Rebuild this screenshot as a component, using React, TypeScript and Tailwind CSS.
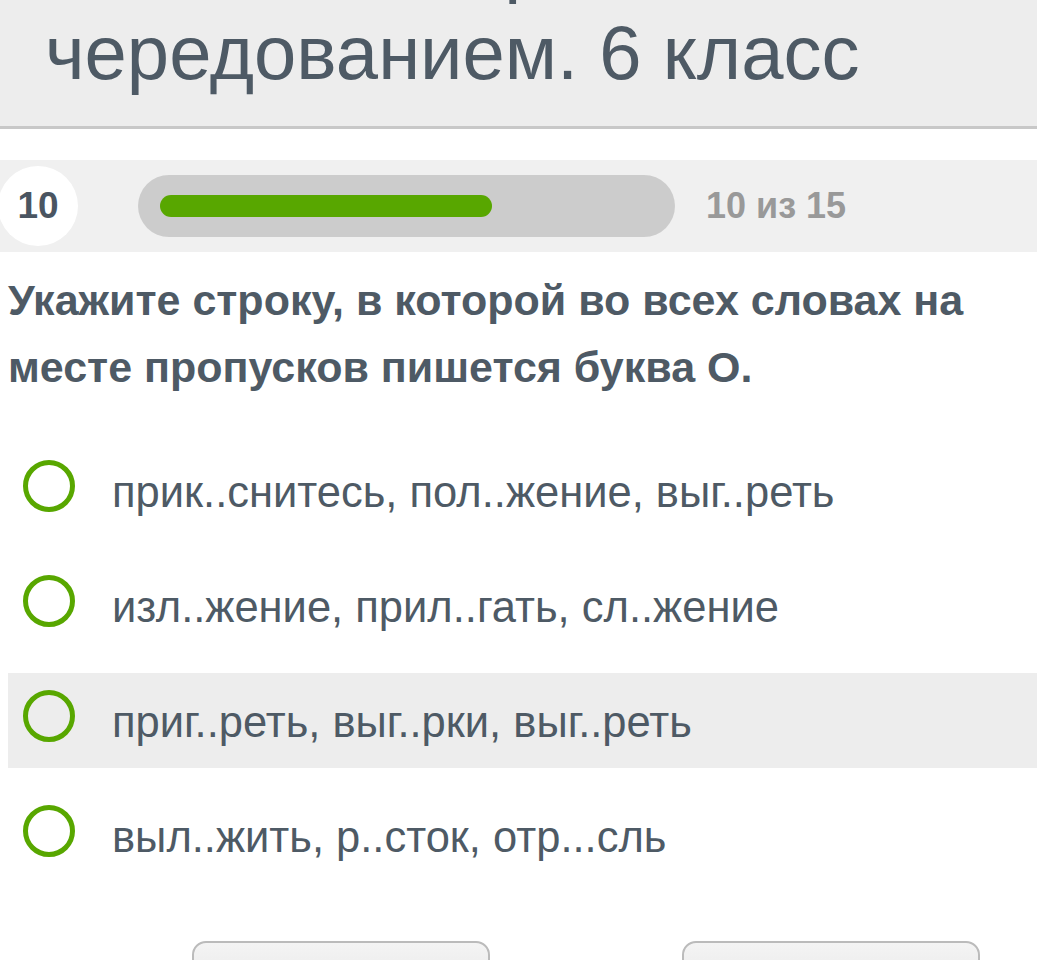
const options = [
  'прик..снитесь, пол..жение, выг..реть',
  'изл..жение, прил..гать, сл..жение',
  'приг..реть, выг..рки, выг..реть',
  'выл..жить, р..сток, отр...сль',
];

export default function App() {
  const progress = 332 / 493;

  return (
    <div className="w-[1037px] h-[960px] overflow-hidden bg-white text-[#4e5a65] font-['Liberation_Sans',Arial,sans-serif]">
      {/* header */}
      <div className="bg-[#ededed] border-b-[3px] border-[#c8c8c8] h-[129px] overflow-hidden">
        <div className="-mt-[84px] pl-[45px] text-[76px] leading-[91px] whitespace-nowrap">
          <div>Гласные в корнях с</div>
          <div>чередованием. 6 класс</div>
        </div>
      </div>

      {/* progress */}
      <div className="mt-[31px] h-[92px] bg-[#f0f0f0] flex items-center">
        <div className="-ml-[2px] w-[80px] h-[80px] rounded-full bg-white flex items-center justify-center text-[37px] font-bold text-[#4a5561]">
          10
        </div>
        <div className="ml-[60px] w-[537px] h-[62px] rounded-full bg-[#cccccc] flex items-center px-[22px]">
          <div className="h-[22px] rounded-full bg-[#58a700]" style={{ width: `${progress * 100}%` }} />
        </div>
        <div className="ml-[31px] text-[36px] font-bold text-[#999999]">10 из 15</div>
      </div>

      {/* question */}
      <div className="pl-[8px] pr-[4px] pt-[15px] text-[43px] leading-[67px] font-bold">
        Укажите строку, в которой во всех словах на месте пропусков пишется буква О.
      </div>

      <div className="mt-[42px] flex flex-col gap-[20px]">
        {options.map((o, i) => (
          <div
            key={i}
            className={`ml-[8px] h-[95px] flex items-center pl-[15px] ${i === 2 ? 'bg-[#ededed]' : ''}`}
          >
            <div className="w-[52px] h-[52px] mb-[10px] rounded-full border-[5px] border-[#58a700] shrink-0" />
            <div className="ml-[37px] mt-[4px] text-[43.5px] whitespace-nowrap">{o}</div>
          </div>
        ))}
      </div>

      {/* buttons */}
      <div className="mt-[58px] flex pl-[192px] gap-[192px]">
        <button className="w-[298px] h-[60px] rounded-[14px] border-2 border-[#bbbbbb] bg-gradient-to-b from-[#f4f4f4] to-[#e6e6e6]" />
        <button className="w-[298px] h-[60px] rounded-[14px] border-2 border-[#bbbbbb] bg-gradient-to-b from-[#f4f4f4] to-[#e6e6e6]" />
      </div>
    </div>
  );
}
